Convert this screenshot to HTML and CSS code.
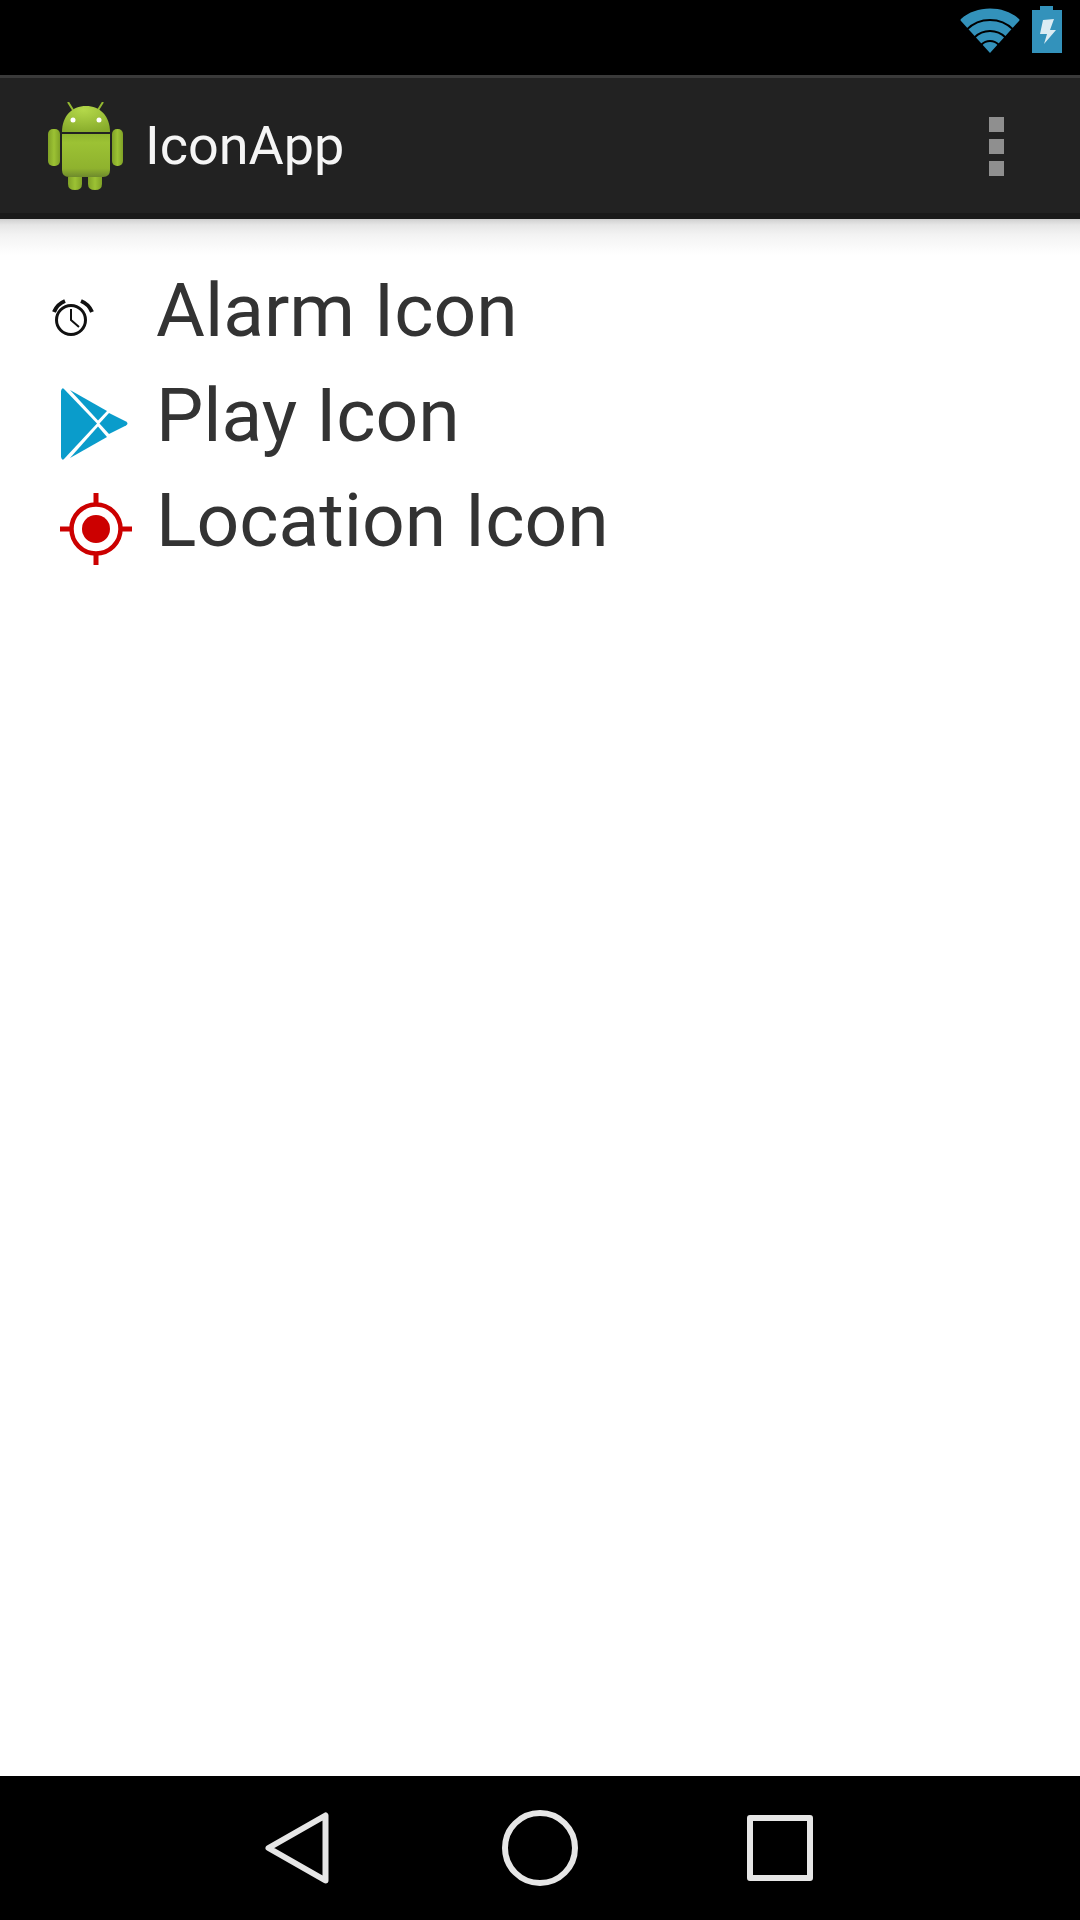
FILE: index.html
```html
<!DOCTYPE html>
<html>
  <head>
    <title>IconApp</title>
    <link rel="stylesheet" href="styles.css">
  </head>
  <body>
    <div class="screen">
      <!-- status bar -->
      <div class="status-bar">
        <svg class="wifi" width="60" height="45" viewBox="0 0 60 45">
          <path d="M30 45 L1 13 Q0 12 1 11 C16 -3 44 -3 59 11 Q60 12 59 13 Z" fill="#3392bb"/>
          <g fill="none" stroke="#000" stroke-width="2">
            <circle cx="30" cy="45" r="33"/>
            <circle cx="30" cy="45" r="22"/>
            <circle cx="30" cy="45" r="12"/>
          </g>
        </svg>
        <svg class="battery" width="30" height="47" viewBox="0 0 30 47">
          <path d="M8 0 H21 V4 H30 V47 H0 V4 H8 Z" fill="#3392bb"/>
          <path d="M11 14 L22 13 L18 24 H24 L12 38 L15 28 H8 Z" fill="#dcecf3"/>
        </svg>
      </div>

      <!-- action bar -->
      <div class="action-bar">
        <svg class="app-icon" width="75" height="88" viewBox="0 0 75 88">
          <defs>
            <radialGradient id="droid-head" cx="0.45" cy="0.15" r="0.9">
              <stop offset="0" stop-color="#b4d84a"/>
              <stop offset="1" stop-color="#86aa2a"/>
            </radialGradient>
            <linearGradient id="droid-body" x1="0" y1="0" x2="0" y2="1">
              <stop offset="0" stop-color="#8fb52e"/>
              <stop offset="0.2" stop-color="#9cc234"/>
              <stop offset="0.8" stop-color="#8fb22e"/>
              <stop offset="1" stop-color="#6e8a2c"/>
            </linearGradient>
            <linearGradient id="droid-arm" x1="0" y1="0" x2="1" y2="0">
              <stop offset="0" stop-color="#7fa126"/>
              <stop offset="0.5" stop-color="#9cc234"/>
              <stop offset="1" stop-color="#7fa126"/>
            </linearGradient>
          </defs>
          <path d="M25 8 L20 0 M50 8 L55 0" stroke="#93b831" stroke-width="2"/>
          <path d="M14 30 C14 14 24 4 38 4 C52 4 62 14 62 30 Z" fill="url(#droid-head)"/>
          <circle cx="25" cy="18" r="2.5" fill="#fff"/>
          <circle cx="51" cy="18" r="2.5" fill="#fff"/>
          <path d="M14 32 H62 V68 Q62 75 55 75 H21 Q14 75 14 68 Z" fill="url(#droid-body)"/>
          <rect x="0" y="27" width="12" height="37" rx="5" fill="url(#droid-arm)"/>
          <rect x="64" y="27" width="11" height="37" rx="5" fill="url(#droid-arm)"/>
          <path d="M20 75 H34 V82 Q34 88 27 88 Q20 88 20 82 Z" fill="url(#droid-arm)"/>
          <path d="M40 75 H54 V82 Q54 88 47 88 Q40 88 40 82 Z" fill="url(#droid-arm)"/>
        </svg>
        <span class="app-title">IconApp</span>
        <div class="overflow">
          <span class="dot"></span>
          <span class="dot"></span>
          <span class="dot"></span>
        </div>
      </div>

      <!-- icon list -->
      <div class="content">
        <div class="row">
          <div class="icon-box">
            <svg class="alarm" width="44" height="40" viewBox="0 0 44 40" fill="none" stroke="#111">
              <circle cx="20" cy="22" r="14.5" stroke-width="3"/>
              <path d="M20 11 V22 L28 29" stroke-width="2"/>
              <path d="M3 14 C5 9 9 5 14 3 M41 14 C39 9 35 5 30 3" stroke-width="4"/>
            </svg>
          </div>
          <span class="label">Alarm Icon</span>
        </div>
        <div class="row">
          <div class="icon-box">
            <svg class="play" width="68" height="72" viewBox="0 0 68 72" fill="#0a9ccb">
              <path d="M0 3 Q1 -1 3 1 L36 35.5 L3 71 Q1 73 0 69 Z"/>
              <path d="M9 2 L46 23 L37 32.5 Z"/>
              <path d="M9 70 L46 49 L37 38.5 Z"/>
              <path d="M48 25 L65 33.5 Q68 35.5 65 37.5 L48 46 L38.500 35.500 Z"/>
            </svg>
          </div>
          <span class="label">Play Icon</span>
        </div>
        <div class="row">
          <div class="icon-box">
            <svg class="target" width="72" height="72" viewBox="0 0 72 72" fill="none" stroke="#cc0000">
              <circle cx="36" cy="36" r="24.5" stroke-width="4.5"/>
              <circle cx="36" cy="36" r="14" fill="#cc0000" stroke="none"/>
              <path d="M36 0 V11 M36 61 V72 M0 36 H11 M61 36 H72" stroke-width="5"/>
            </svg>
          </div>
          <span class="label">Location Icon</span>
        </div>
      </div>

      <!-- nav bar -->
      <div class="nav-bar">
        <svg width="64" height="72" viewBox="0 0 64 72" fill="none" stroke="#e6e6e6" stroke-width="6" stroke-linejoin="round">
          <path d="M3.500 36 L60.500 3.500 V68.500 Z"/>
        </svg>
        <svg class="nav-home" width="76" height="76" viewBox="0 0 76 76" fill="none" stroke="#e6e6e6" stroke-width="6">
          <circle cx="38" cy="38" r="35"/>
        </svg>
        <svg class="nav-recent" width="66" height="66" viewBox="0 0 66 66" fill="none" stroke="#e6e6e6" stroke-width="6" stroke-linejoin="round">
          <rect x="3" y="3" width="60" height="60"/>
        </svg>
      </div>
    </div>
  </body>
</html>
```

FILE: styles.css
```css
html, body {
  margin: 0;
  padding: 0;
}
.screen {
  width: 1080px;
  height: 1920px;
  display: flex;
  flex-direction: column;
  background-color: #fff;
  font-family: Roboto, "Liberation Sans", sans-serif;
  overflow: hidden;
}
.status-bar {
  height: 75px;
  flex: none;
  background-color: #000;
  display: flex;
  justify-content: flex-end;
  align-items: flex-start;
  gap: 12px;
  padding: 6px 18px 0 0;
  box-sizing: border-box;
}
.wifi {
  margin: 2px 0 0 0;
}
.action-bar {
  height: 144px;
  flex: none;
  box-sizing: border-box;
  background-color: #222;
  border-top: 3px solid #3a3a3a;
  border-bottom: 6px solid #1a1a1a;
  display: flex;
  align-items: center;
  padding-left: 48px;
}
.app-title {
  color: #f5f5f5;
  font-size: 54px;
  margin-left: 22px;
}
.overflow {
  margin-left: auto;
  margin-right: 76px;
  margin-top: 2px;
  display: flex;
  flex-direction: column;
  gap: 7px;
}
.dot {
  width: 15px;
  height: 15px;
  background-color: #8f8f8f;
}
.content {
  flex: 1;
  padding-top: 39px;
  background: linear-gradient(#cfcfcf, #e6e6e6 6px, #f3f3f3 16px, #fff 36px) no-repeat;
}
.row {
  height: 105px;
  display: flex;
  align-items: flex-start;
}
.icon-box {
  width: 156px;
  flex: none;
}
.icon-box svg {
  display: block;
}
.alarm {
  margin: 40px 0 0 51px;
}
.play {
  margin: 25px 0 0 61px;
}
.target {
  margin: 25px 0 0 60px;
}
.label {
  color: #333;
  font-size: 75px;
  line-height: 105px;
}
.nav-bar {
  height: 144px;
  flex: none;
  background-color: #000;
  display: flex;
  align-items: center;
  padding-left: 265px;
}
.nav-home {
  margin-left: 173px;
}
.nav-recent {
  margin-left: 169px;
}
```
